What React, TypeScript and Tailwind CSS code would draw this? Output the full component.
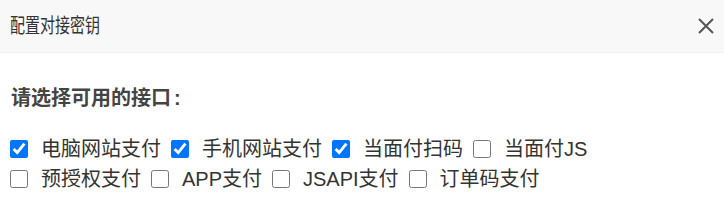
import React from "react";

const items: { label: string; checked: boolean }[] = [
  { label: "电脑网站支付", checked: true },
  { label: "手机网站支付", checked: true },
  { label: "当面付扫码", checked: true },
  { label: "当面付JS", checked: false },
  { label: "预授权支付", checked: false },
  { label: "APP支付", checked: false },
  { label: "JSAPI支付", checked: false },
  { label: "订单码支付", checked: false },
];

export default function App() {
  return (
    <div className="w-[724px] h-[218px] bg-white text-[#333] font-['Liberation_Sans','Noto_Sans_CJK_SC',sans-serif]">
      <div className="h-[53px] bg-[#f8f8f8] border-b border-[#eeeeee] flex items-center justify-between pl-[10px] pr-[9px]">
        <span className="inline-block text-[20px] text-[#333] origin-left scale-x-75">
          配置对接密钥
        </span>
        <svg width="18" height="18" viewBox="0 0 18 18" className="text-[#555]">
          <path d="M2 2 L16 16 M16 2 L2 16" stroke="currentColor" strokeWidth="2" />
        </svg>
      </div>
      <div className="px-[10px] pt-[33px]">
        <div className="text-[20px] font-bold text-[#444] leading-[24px] pl-[1px]">
          请选择可用的接口<span className="ml-[3px]">:</span>
        </div>
        <div className="mt-[24px] w-[640px] flex flex-wrap leading-[30px] text-[20px] text-[#333]">
          {items.map((it) => (
            <label key={it.label} className="flex items-center mr-[10px]">
              <input
                type="checkbox"
                defaultChecked={it.checked}
                className="w-[18px] h-[18px] m-0 mr-[13px]"
              />
              <span>{it.label}</span>
            </label>
          ))}
        </div>
      </div>
    </div>
  );
}
